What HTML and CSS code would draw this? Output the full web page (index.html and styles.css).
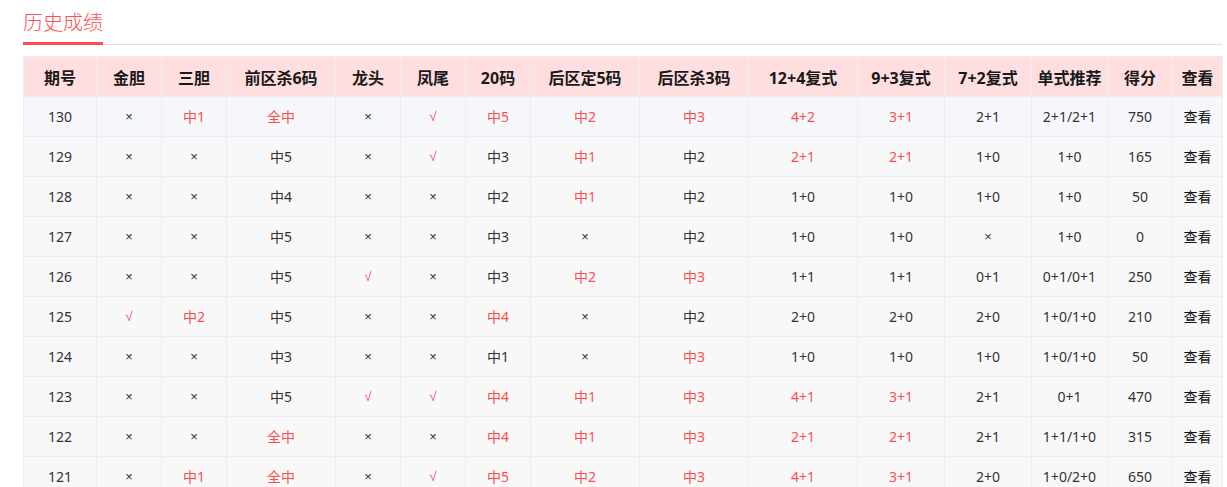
FILE: index.html
```html
<!DOCTYPE html>
<html lang="zh">
<head>
<meta charset="utf-8">
<title>历史成绩</title>
<link rel="stylesheet" href="styles.css">
</head>
<body>
<div class="page">
  <div class="tabs"><span class="tab">历史成绩</span></div>
  <table class="grid">
    <colgroup>
      <col class="w73"><col class="w65"><col class="w65"><col class="w109"><col class="w65"><col class="w65"><col class="w65"><col class="w109"><col class="w109"><col class="w109"><col class="w87"><col class="w87"><col class="w76"><col class="w65"><col class="w50">
    </colgroup>
    <thead>
      <tr><th>期号</th><th>金胆</th><th>三胆</th><th>前区杀6码</th><th>龙头</th><th>凤尾</th><th>20码</th><th>后区定5码</th><th>后区杀3码</th><th>12+4复式</th><th>9+3复式</th><th>7+2复式</th><th>单式推荐</th><th>得分</th><th>查看</th></tr>
    </thead>
    <tbody>
      <tr class="hover"><td>130</td><td class="s">×</td><td class="r">中1</td><td class="r">全中</td><td class="s">×</td><td class="r s">√</td><td class="r">中5</td><td class="r">中2</td><td class="r">中3</td><td class="r">4+2</td><td class="r">3+1</td><td>2+1</td><td>2+1/2+1</td><td>750</td><td class="v">查看</td></tr>
      <tr><td>129</td><td class="s">×</td><td class="s">×</td><td>中5</td><td class="s">×</td><td class="r s">√</td><td>中3</td><td class="r">中1</td><td>中2</td><td class="r">2+1</td><td class="r">2+1</td><td>1+0</td><td>1+0</td><td>165</td><td class="v">查看</td></tr>
      <tr><td>128</td><td class="s">×</td><td class="s">×</td><td>中4</td><td class="s">×</td><td class="s">×</td><td>中2</td><td class="r">中1</td><td>中2</td><td>1+0</td><td>1+0</td><td>1+0</td><td>1+0</td><td>50</td><td class="v">查看</td></tr>
      <tr><td>127</td><td class="s">×</td><td class="s">×</td><td>中5</td><td class="s">×</td><td class="s">×</td><td>中3</td><td class="s">×</td><td>中2</td><td>1+0</td><td>1+0</td><td class="s">×</td><td>1+0</td><td>0</td><td class="v">查看</td></tr>
      <tr><td>126</td><td class="s">×</td><td class="s">×</td><td>中5</td><td class="r s">√</td><td class="s">×</td><td>中3</td><td class="r">中2</td><td class="r">中3</td><td>1+1</td><td>1+1</td><td>0+1</td><td>0+1/0+1</td><td>250</td><td class="v">查看</td></tr>
      <tr><td>125</td><td class="r s">√</td><td class="r">中2</td><td>中5</td><td class="s">×</td><td class="s">×</td><td class="r">中4</td><td class="s">×</td><td>中2</td><td>2+0</td><td>2+0</td><td>2+0</td><td>1+0/1+0</td><td>210</td><td class="v">查看</td></tr>
      <tr><td>124</td><td class="s">×</td><td class="s">×</td><td>中3</td><td class="s">×</td><td class="s">×</td><td>中1</td><td class="s">×</td><td class="r">中3</td><td>1+0</td><td>1+0</td><td>1+0</td><td>1+0/1+0</td><td>50</td><td class="v">查看</td></tr>
      <tr><td>123</td><td class="s">×</td><td class="s">×</td><td>中5</td><td class="r s">√</td><td class="r s">√</td><td class="r">中4</td><td class="r">中1</td><td class="r">中3</td><td class="r">4+1</td><td class="r">3+1</td><td>2+1</td><td>0+1</td><td>470</td><td class="v">查看</td></tr>
      <tr><td>122</td><td class="s">×</td><td class="s">×</td><td class="r">全中</td><td class="s">×</td><td class="s">×</td><td class="r">中4</td><td class="r">中1</td><td class="r">中3</td><td class="r">2+1</td><td class="r">2+1</td><td>2+1</td><td>1+1/1+0</td><td>315</td><td class="v">查看</td></tr>
      <tr><td>121</td><td class="s">×</td><td class="r">中1</td><td class="r">全中</td><td class="s">×</td><td class="r s">√</td><td class="r">中5</td><td class="r">中2</td><td class="r">中3</td><td class="r">4+1</td><td class="r">3+1</td><td>2+0</td><td>1+0/2+0</td><td>650</td><td class="v">查看</td></tr>
    </tbody>
  </table>
</div>
</body>
</html>
```

FILE: styles.css
```css
html, body {
  margin: 0;
  padding: 0;
  background: #ffffff;
}

body {
  font-family: "Noto Sans", "Noto Sans CJK SC", sans-serif;
  color: #333333;
}

.page {
  padding: 8px 5px 0 23px;
}

.tabs {
  display: flex;
  border-bottom: 1px solid #f6d6d8;
}

.tab {
  display: block;
  font-family: "Noto Sans CJK SC", sans-serif;
  font-size: 20px;
  font-weight: 300;
  line-height: 28px;
  color: #ff5050;
  padding-bottom: 6px;
  border-bottom: 3px solid #ff4d4f;
  margin-bottom: -1px;
}

.grid {
  margin-top: 11px;
  width: 1200px;
  table-layout: fixed;
  border-collapse: collapse;
}

.w73 { width: 73px; }
.w65 { width: 65px; }
.w109 { width: 109px; }
.w87 { width: 87px; }
.w76 { width: 76px; }
.w50 { width: 50px; }

.grid th,
.grid td {
  border: 1px solid #ebeef5;
  text-align: center;
  padding: 0;
  white-space: nowrap;
  overflow: hidden;
}

.grid th {
  height: 39px;
  background: #ffdee0;
  font-size: 16px;
  font-weight: 700;
  color: #1a1a1a;
}

.grid td {
  height: 39px;
  background: #f8f8f9;
  font-size: 14px;
  line-height: 18px;
  color: #333333;
}

.grid tr.hover td {
  background: #f5f7fa;
}

.grid td.s {
  font-family: "Liberation Sans", "DejaVu Sans", sans-serif;
  font-size: 13px;
}

.grid td.r {
  color: #ff4d4f;
}

.grid td.v {
  color: #111111;
}
```
